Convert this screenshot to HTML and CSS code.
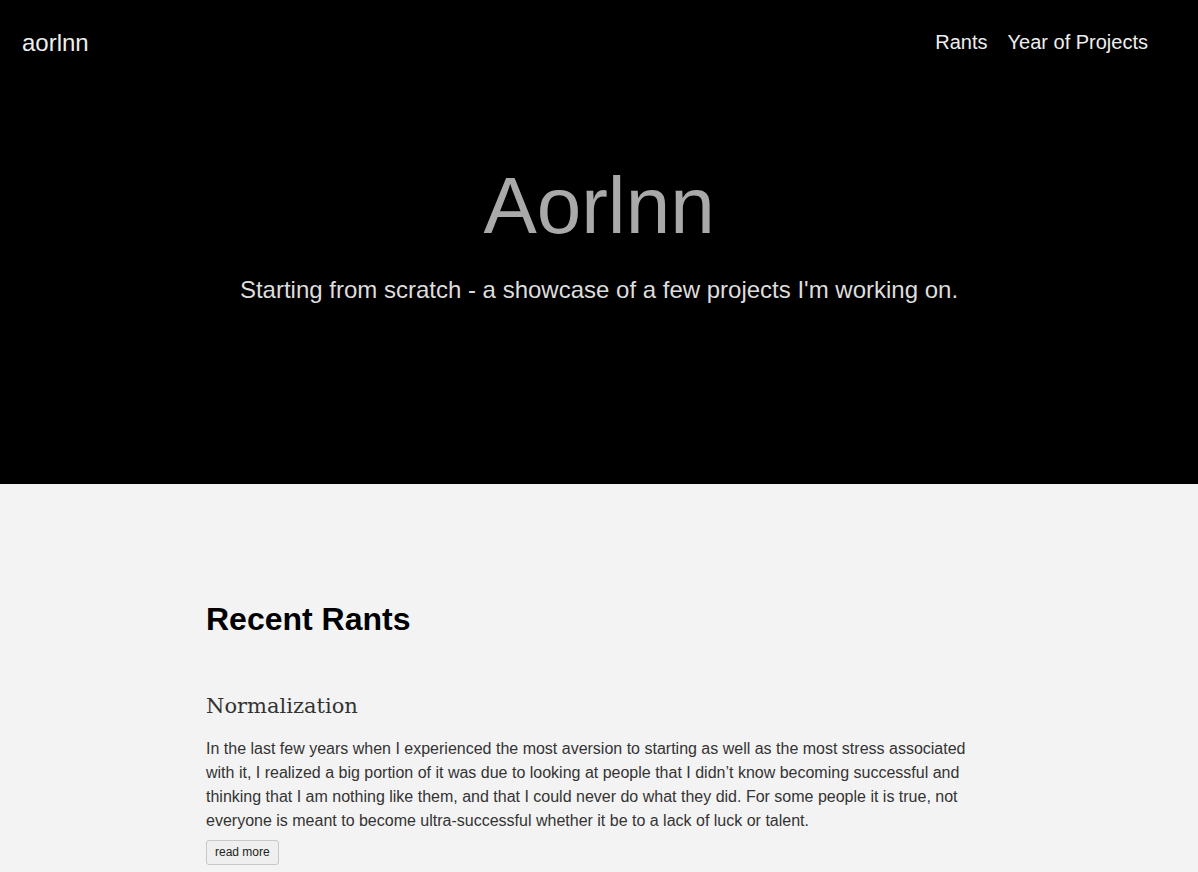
FILE: index.html
```html
<!DOCTYPE html>
<html lang="en">
<head>
<meta charset="utf-8">
<title>aorlnn</title>
<link rel="stylesheet" href="styles.css">
</head>
<body>
<header class="hero">
  <nav class="topbar">
    <a class="brand" href="#">aorlnn</a>
    <div class="links">
      <a href="#">Rants</a>
      <a href="#">Year of Projects</a>
    </div>
  </nav>
  <div class="hero-body">
    <h1 class="hero-title">Aorlnn</h1>
    <p class="hero-sub">Starting from scratch - a showcase of a few projects I'm working on.</p>
  </div>
</header>
<main class="content">
  <div class="container">
    <h2 class="section-title">Recent Rants</h2>
    <article class="rant">
      <h3 class="rant-title">Normalization</h3>
      <p class="rant-text">In the last few years when I experienced the most aversion to starting as well as the most stress associated with it, I realized a big portion of it was due to looking at people that I didn’t know becoming successful and thinking that I am nothing like them, and that I could never do what they did. For some people it is true, not everyone is meant to become ultra-successful whether it be to a lack of luck or talent.</p>
      <button class="more">read more</button>
    </article>
  </div>
</main>
</body>
</html>
```

FILE: styles.css
```css
html, body {
  margin: 0;
  padding: 0;
}
body {
  font-family: "Liberation Sans", Arial, sans-serif;
  background: #f3f3f3;
}
.hero {
  background: #000;
  height: 484px;
  display: flex;
  flex-direction: column;
}
.topbar {
  display: flex;
  justify-content: space-between;
  align-items: flex-start;
  padding: 28px 50px 0 22px;
}
.topbar a {
  color: #eeeeee;
  text-decoration: none;
}
.brand {
  font-size: 24px;
  line-height: 30px;
}
.links {
  display: flex;
  gap: 20px;
  font-size: 20px;
  line-height: 28px;
}
.hero-body {
  text-align: center;
  padding-top: 102px;
}
.hero-title {
  margin: 0;
  font-weight: normal;
  font-size: 80px;
  line-height: 92px;
  color: #a9a9a9;
}
.hero-sub {
  margin: 23px 0 0;
  font-size: 24px;
  line-height: 30px;
  color: #dddddd;
}
.content {
  padding: 115px 0 40px;
}
.container {
  width: 786px;
  margin: 0 auto;
}
.section-title {
  margin: 0;
  font-size: 32px;
  line-height: 40px;
  color: #000;
}
.rant {
  margin-top: 51px;
}
.rant-title {
  margin: 0;
  font-family: "DejaVu Serif", Georgia, serif;
  font-weight: normal;
  font-size: 21px;
  line-height: 32px;
  color: #333;
}
.rant-text {
  margin: 15px 0 0;
  font-size: 16px;
  line-height: 24px;
  color: #333;
}
.more {
  margin-top: 7px;
  font-family: "Liberation Sans", Arial, sans-serif;
  font-size: 12px;
  line-height: 15px;
  padding: 4px 8px;
  color: #222;
  background: #efefef;
  border: 1px solid #c8c8c8;
  border-radius: 3px;
}
```
